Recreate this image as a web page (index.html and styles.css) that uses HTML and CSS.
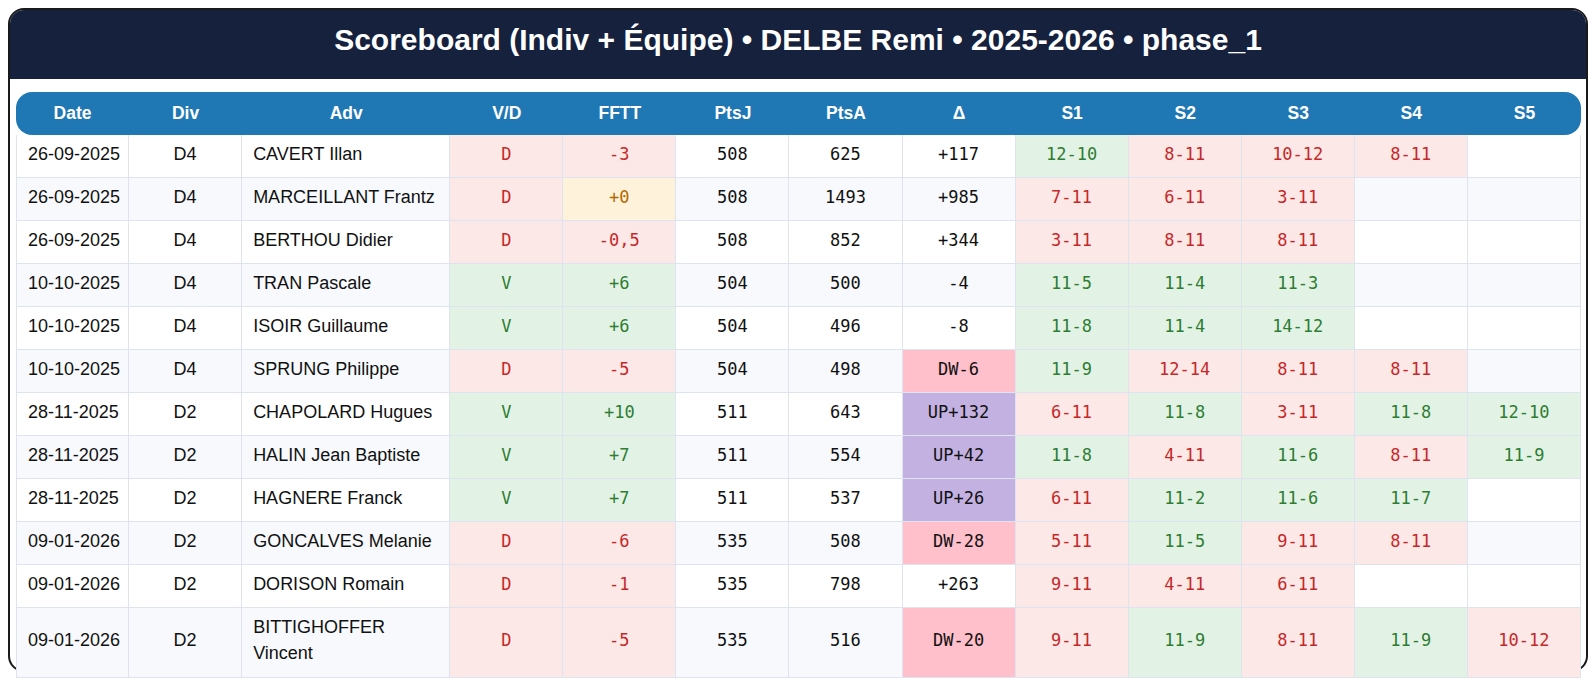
FILE: index.html
```html
<!DOCTYPE html>
<html lang="fr">
<head>
<meta charset="utf-8">
<title>Scoreboard</title>
<link rel="stylesheet" href="styles.css">
</head>
<body>
<div class="card">
  <h1 class="title">Scoreboard (Indiv + Équipe) • DELBE Remi • 2025-2026 • phase_1</h1>
  <div class="content">
    <table class="score">
      <colgroup>
        <col class="c-std"><col class="c-std"><col class="c-adv">
        <col class="c-std"><col class="c-std"><col class="c-std"><col class="c-std"><col class="c-std">
        <col class="c-std"><col class="c-std"><col class="c-std"><col class="c-std"><col class="c-std">
      </colgroup>
      <thead>
        <tr><th>Date</th><th>Div</th><th>Adv</th><th>V/D</th><th>FFTT</th><th>PtsJ</th><th>PtsA</th><th>Δ</th><th>S1</th><th>S2</th><th>S3</th><th>S4</th><th>S5</th></tr>
      </thead>
      <tbody>
        <tr><td class="txt date">26-09-2025</td><td class="txt ctr">D4</td><td class="txt">CAVERT Illan</td><td class="m lose">D</td><td class="m lose">-3</td><td class="m">508</td><td class="m">625</td><td class="m">+117</td><td class="m win">12-10</td><td class="m lose">8-11</td><td class="m lose">10-12</td><td class="m lose">8-11</td><td class="m"></td></tr>
        <tr><td class="txt date">26-09-2025</td><td class="txt ctr">D4</td><td class="txt">MARCEILLANT Frantz</td><td class="m lose">D</td><td class="m even">+0</td><td class="m">508</td><td class="m">1493</td><td class="m">+985</td><td class="m lose">7-11</td><td class="m lose">6-11</td><td class="m lose">3-11</td><td class="m"></td><td class="m"></td></tr>
        <tr><td class="txt date">26-09-2025</td><td class="txt ctr">D4</td><td class="txt">BERTHOU Didier</td><td class="m lose">D</td><td class="m lose">-0,5</td><td class="m">508</td><td class="m">852</td><td class="m">+344</td><td class="m lose">3-11</td><td class="m lose">8-11</td><td class="m lose">8-11</td><td class="m"></td><td class="m"></td></tr>
        <tr><td class="txt date">10-10-2025</td><td class="txt ctr">D4</td><td class="txt">TRAN Pascale</td><td class="m win">V</td><td class="m win">+6</td><td class="m">504</td><td class="m">500</td><td class="m">-4</td><td class="m win">11-5</td><td class="m win">11-4</td><td class="m win">11-3</td><td class="m"></td><td class="m"></td></tr>
        <tr><td class="txt date">10-10-2025</td><td class="txt ctr">D4</td><td class="txt">ISOIR Guillaume</td><td class="m win">V</td><td class="m win">+6</td><td class="m">504</td><td class="m">496</td><td class="m">-8</td><td class="m win">11-8</td><td class="m win">11-4</td><td class="m win">14-12</td><td class="m"></td><td class="m"></td></tr>
        <tr><td class="txt date">10-10-2025</td><td class="txt ctr">D4</td><td class="txt">SPRUNG Philippe</td><td class="m lose">D</td><td class="m lose">-5</td><td class="m">504</td><td class="m">498</td><td class="m dw">DW-6</td><td class="m win">11-9</td><td class="m lose">12-14</td><td class="m lose">8-11</td><td class="m lose">8-11</td><td class="m"></td></tr>
        <tr><td class="txt date">28-11-2025</td><td class="txt ctr">D2</td><td class="txt">CHAPOLARD Hugues</td><td class="m win">V</td><td class="m win">+10</td><td class="m">511</td><td class="m">643</td><td class="m up">UP+132</td><td class="m lose">6-11</td><td class="m win">11-8</td><td class="m lose">3-11</td><td class="m win">11-8</td><td class="m win">12-10</td></tr>
        <tr><td class="txt date">28-11-2025</td><td class="txt ctr">D2</td><td class="txt">HALIN Jean Baptiste</td><td class="m win">V</td><td class="m win">+7</td><td class="m">511</td><td class="m">554</td><td class="m up">UP+42</td><td class="m win">11-8</td><td class="m lose">4-11</td><td class="m win">11-6</td><td class="m lose">8-11</td><td class="m win">11-9</td></tr>
        <tr><td class="txt date">28-11-2025</td><td class="txt ctr">D2</td><td class="txt">HAGNERE Franck</td><td class="m win">V</td><td class="m win">+7</td><td class="m">511</td><td class="m">537</td><td class="m up">UP+26</td><td class="m lose">6-11</td><td class="m win">11-2</td><td class="m win">11-6</td><td class="m win">11-7</td><td class="m"></td></tr>
        <tr><td class="txt date">09-01-2026</td><td class="txt ctr">D2</td><td class="txt">GONCALVES Melanie</td><td class="m lose">D</td><td class="m lose">-6</td><td class="m">535</td><td class="m">508</td><td class="m dw">DW-28</td><td class="m lose">5-11</td><td class="m win">11-5</td><td class="m lose">9-11</td><td class="m lose">8-11</td><td class="m"></td></tr>
        <tr><td class="txt date">09-01-2026</td><td class="txt ctr">D2</td><td class="txt">DORISON Romain</td><td class="m lose">D</td><td class="m lose">-1</td><td class="m">535</td><td class="m">798</td><td class="m">+263</td><td class="m lose">9-11</td><td class="m lose">4-11</td><td class="m lose">6-11</td><td class="m"></td><td class="m"></td></tr>
        <tr><td class="txt date">09-01-2026</td><td class="txt ctr">D2</td><td class="txt">BITTIGHOFFER Vincent</td><td class="m lose">D</td><td class="m lose">-5</td><td class="m">535</td><td class="m">516</td><td class="m dw">DW-20</td><td class="m lose">9-11</td><td class="m win">11-9</td><td class="m lose">8-11</td><td class="m win">11-9</td><td class="m lose">10-12</td></tr>
      </tbody>
    </table>
  </div>
</div>
</body>
</html>
```

FILE: styles.css
```css
html, body {
  margin: 0;
  padding: 0;
  background: #ffffff;
}
body {
  padding: 8px;
  font-family: "Liberation Sans", Arial, sans-serif;
  color: #111111;
}
.card {
  box-sizing: border-box;
  height: 664px;
  border: 2px solid #1a1a1a;
  border-radius: 16px;
  background: #ffffff;
}
.title {
  margin: 0;
  background: #15213d;
  color: #ffffff;
  font-size: 30px;
  font-weight: bold;
  line-height: 36px;
  text-align: center;
  padding: 12px 0 21px;
  border-radius: 14px 14px 0 0;
}
.content {
  padding: 13px 5px 0 6px;
}
.score {
  width: 1565px;
  table-layout: fixed;
  border-collapse: separate;
  border-spacing: 0;
  background: #ffffff;
}
.c-std { width: 113px; }
.c-adv { width: 208px; }
.score th {
  background: #1f77b4;
  color: #ffffff;
  font-size: 17.5px;
  font-weight: bold;
  height: 43px;
  padding: 0;
  text-align: center;
}
.score th:first-child { border-radius: 16px 0 0 16px; }
.score th:last-child { border-radius: 0 16px 16px 0; }
.score td {
  border-right: 1px solid #dde4f0;
  border-bottom: 1px solid #dde4f0;
  padding: 6px 11px 10px;
  line-height: 26px;
  vertical-align: middle;
}
.score td:first-child { border-left: 1px solid #dde4f0; }
.score tbody tr:nth-child(even) td { background: #f7f9fd; }
.txt {
  font-size: 18px;
  text-align: left;
}
.date {
  white-space: nowrap;
  padding-right: 0;
}
.ctr { text-align: center; }
.m {
  font-family: "DejaVu Sans Mono", "Liberation Mono", monospace;
  font-size: 17px;
  text-align: center;
  color: #111111;
}
.score tbody tr:last-child td {
  padding-bottom: 11px;
}
.score tbody tr td.lose { background: #fde8e8; color: #c62828; }
.score tbody tr td.win { background: #e2f3e6; color: #2e7d32; }
.score tbody tr td.even { background: #fff2db; color: #b06a00; }
.score tbody tr td.dw { background: #ffbfcb; color: #111111; }
.score tbody tr td.up { background: #c3b1e1; color: #111111; }
```
